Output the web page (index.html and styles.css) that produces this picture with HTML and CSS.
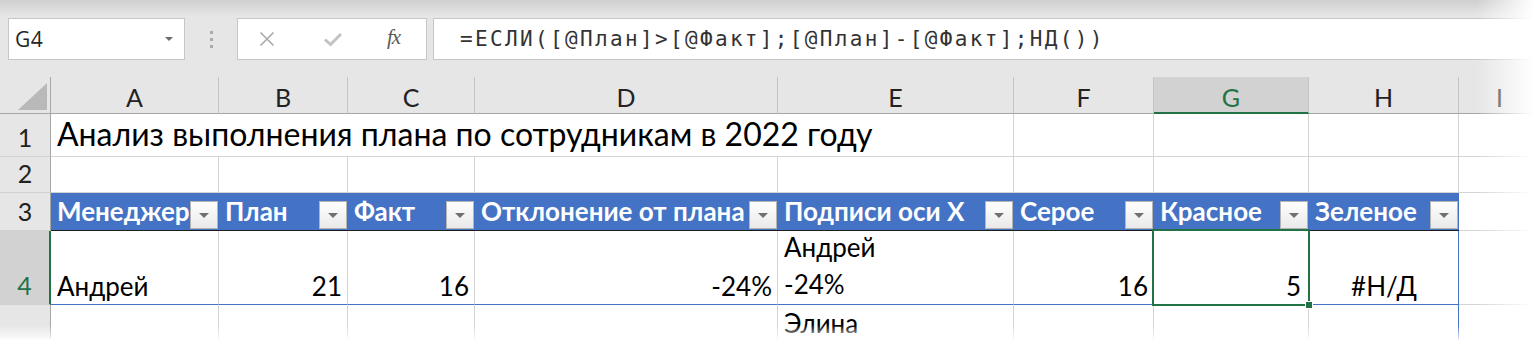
FILE: index.html
```html
<!DOCTYPE html>
<html lang="ru">
<head>
<meta charset="utf-8">
<title>Excel</title>
<link rel="stylesheet" href="styles.css">
</head>
<body>
<div class="app">
  <div class="toolbar">
    <div class="namebox"><span class="nb-text">G4</span><span class="nb-arrow"></span></div>
    <div class="grip"><i></i><i></i><i></i></div>
    <div class="fxbtns">
      <svg class="ic-x" width="16" height="16" viewBox="0 0 16 16"><path d="M1.5 1.5 L14.5 14.5 M14.5 1.5 L1.5 14.5" stroke="#a9a9a9" stroke-width="1.6" fill="none"/></svg>
      <svg class="ic-check" width="20" height="16" viewBox="0 0 20 16"><path d="M2 8.5 L7.5 13.5 L18 3" stroke="#c3c3c3" stroke-width="3" fill="none"/></svg>
      <span class="fx">fx</span>
    </div>
    <div class="formula">=ЕСЛИ([@План]&gt;[@Факт];[@План]-[@Факт];НД())</div>
  </div>

  <div class="sheet">
    <div class="corner"><span class="corner-tri"></span></div>
    <div class="ch">A</div>
    <div class="ch">B</div>
    <div class="ch">C</div>
    <div class="ch">D</div>
    <div class="ch">E</div>
    <div class="ch">F</div>
    <div class="ch ch-sel">G</div>
    <div class="ch">H</div>
    <div class="ch ch-last">I</div>

    <div class="rh">1</div>
    <div class="c c-title">Анализ выполнения плана по сотрудникам в 2022 году</div>
    <div class="c"></div>
    <div class="c"></div>
    <div class="c"></div>
    <div class="c c-last"></div>

    <div class="rh">2</div>
    <div class="c"></div>
    <div class="c"></div>
    <div class="c"></div>
    <div class="c"></div>
    <div class="c"></div>
    <div class="c"></div>
    <div class="c"></div>
    <div class="c"></div>
    <div class="c c-last"></div>

    <div class="rh">3</div>
    <div class="th"><span class="th-label">Менеджер</span><span class="dd"></span></div>
    <div class="th"><span class="th-label">План</span><span class="dd"></span></div>
    <div class="th"><span class="th-label">Факт</span><span class="dd"></span></div>
    <div class="th"><span class="th-label">Отклонение от плана</span><span class="dd"></span></div>
    <div class="th"><span class="th-label">Подписи оси X</span><span class="dd"></span></div>
    <div class="th"><span class="th-label">Серое</span><span class="dd"></span></div>
    <div class="th"><span class="th-label">Красное</span><span class="dd"></span></div>
    <div class="th"><span class="th-label">Зеленое</span><span class="dd"></span></div>
    <div class="c c-last"></div>

    <div class="rh rh-sel">4</div>
    <div class="c r4">Андрей</div>
    <div class="c r4 num">21</div>
    <div class="c r4 num">16</div>
    <div class="c r4 num">-24%</div>
    <div class="c r4 wrap">Андрей<br>-24%</div>
    <div class="c r4 num">16</div>
    <div class="c r4 num sel">5<span class="sel-box"><span class="handle"></span></span></div>
    <div class="c r4 ctr tbl-end">#Н/Д</div>
    <div class="c c-last"></div>

    <div class="rh"></div>
    <div class="c r5"></div>
    <div class="c r5"></div>
    <div class="c r5"></div>
    <div class="c r5"></div>
    <div class="c r5">Элина</div>
    <div class="c r5"></div>
    <div class="c r5"></div>
    <div class="c r5 tbl-end"></div>
    <div class="c c-last"></div>
  </div>

  <div class="fade-top"></div>
  <div class="fade-right"></div>
  <div class="fade-bottom"></div>
</div>
</body>
</html>
```

FILE: styles.css
```css
html, body {
  margin: 0;
  padding: 0;
  background: #ffffff;
}

.app {
  position: relative;
  width: 1540px;
  height: 339px;
  overflow: hidden;
  background: #ffffff;
  font-family: Lato, "Open Sans", sans-serif;
}

/* ---------- formula bar ---------- */
.toolbar {
  height: 77px;
  box-sizing: border-box;
  padding-top: 18px;
  background: #e6e6e6;
  display: flex;
  align-items: flex-start;
}

.namebox {
  margin-left: 8px;
  width: 177px;
  height: 42px;
  box-sizing: border-box;
  background: #ffffff;
  border: 1px solid #c6c6c6;
  display: flex;
  align-items: center;
  justify-content: space-between;
  padding: 0 11px 0 6px;
}

.nb-text {
  font-family: "Open Sans", sans-serif;
  font-size: 21px;
  color: #262626;
  letter-spacing: 0.5px;
}

.nb-arrow {
  width: 0;
  height: 0;
  border-left: 4px solid transparent;
  border-right: 4px solid transparent;
  border-top: 4px solid #6b6b6b;
}

.grip {
  width: 52px;
  height: 42px;
  display: flex;
  flex-direction: column;
  align-items: center;
  justify-content: center;
  gap: 4px;
}

.grip i {
  display: block;
  width: 3px;
  height: 3px;
  background: #ababab;
}

.fxbtns {
  width: 190px;
  height: 42px;
  box-sizing: border-box;
  background: #ffffff;
  border: 1px solid #c6c6c6;
  display: flex;
  align-items: center;
  padding-left: 21px;
}

.ic-check {
  margin-left: 48px;
}

.fx {
  margin-left: 44px;
  font-family: "Liberation Serif", serif;
  font-style: italic;
  font-size: 21px;
  color: #5a5a5a;
  letter-spacing: -1px;
  margin-top: -3px;
}

.formula {
  flex: 1;
  margin-left: 6px;
  height: 42px;
  box-sizing: border-box;
  background: #ffffff;
  border: 1px solid #c6c6c6;
  border-right: none;
  padding-left: 26px;
  font-family: "DejaVu Sans Mono", monospace;
  font-size: 21px;
  letter-spacing: 2.35px;
  line-height: 40px;
  color: #333333;
  white-space: nowrap;
}

/* ---------- sheet grid ---------- */
.sheet {
  display: grid;
  grid-template-columns: 51px 168px 129px 127px 303px 236px 140px 155px 150px 1fr;
  grid-template-rows: 37px 43px 36px 38px 74px 74px;
  font-size: 26px;
  color: #000000;
}

.corner {
  position: relative;
  background: #e6e6e6;
  border-right: 1px solid #a6a6a6;
  border-bottom: 1px solid #a6a6a6;
  box-sizing: border-box;
}

.corner-tri {
  position: absolute;
  right: 3px;
  bottom: 3px;
  width: 29px;
  height: 27px;
  background: #b9b9b9;
  clip-path: polygon(100% 0, 100% 100%, 0 100%);
}

.ch {
  background: #e6e6e6;
  border-right: 1px solid #c4c4c4;
  border-bottom: 1px solid #a6a6a6;
  box-sizing: border-box;
  display: flex;
  align-items: center;
  justify-content: center;
  font-size: 25px;
  color: #222222;
  padding-top: 3px;
}

.ch-sel {
  background: #d2d2d2;
  color: #217346;
  border-bottom: 2px solid #217346;
  padding-top: 4px;
}

.ch-last {
  border-right: none;
}

.rh {
  background: #e6e6e6;
  border-right: 1px solid #a6a6a6;
  border-bottom: 1px solid #d0d0d0;
  box-sizing: border-box;
  display: flex;
  align-items: flex-end;
  justify-content: center;
  font-size: 25px;
  color: #222222;
  padding-bottom: 3px;
  line-height: 31px;
}

.rh-sel {
  background: #d2d2d2;
  color: #217346;
  border-right: 2px solid #217346;
}

.c {
  border-right: 1px solid #d4d4d4;
  border-bottom: 1px solid #d4d4d4;
  box-sizing: border-box;
  display: flex;
  align-items: flex-end;
  padding: 0 5px 2px 6px;
  white-space: nowrap;
  line-height: 31px;
}

.c-last {
  border-right: none;
}

.c-title {
  grid-column: span 5;
  font-size: 32px;
  line-height: 38px;
  padding-bottom: 3px;
}

.th {
  background: #4472c4;
  border-bottom: 1px solid #1e1e1e;
  box-sizing: border-box;
  display: flex;
  align-items: flex-end;
  justify-content: space-between;
  padding: 0 1px 1px 6px;
  color: #ffffff;
  font-weight: 700;
  line-height: 31px;
  white-space: nowrap;
}

.th-label {
  padding-bottom: 2px;
}

.dd {
  flex: none;
  width: 28px;
  height: 28px;
  box-sizing: border-box;
  border: 1px solid #b4b4b4;
  background: linear-gradient(#ffffff, #e9e9e9);
  display: flex;
  align-items: center;
  justify-content: center;
}

.dd::after {
  content: "";
  width: 0;
  height: 0;
  border-left: 5px solid transparent;
  border-right: 5px solid transparent;
  border-top: 5px solid #707070;
}

.r4 {
  border-bottom: 1px solid #4472c4;
}

.num {
  justify-content: flex-end;
}

.ctr {
  justify-content: center;
}

.wrap {
  line-height: 37px;
  padding-bottom: 1px;
}

.r5 {
  align-items: flex-start;
  padding-top: 3px;
  line-height: 31px;
}

.tbl-end {
  border-right: 1px solid #4472c4;
}

.sel {
  position: relative;
  padding-right: 7px;
}

.sel-box {
  position: absolute;
  left: -2px;
  top: -2px;
  right: -2px;
  bottom: -2px;
  border: 2px solid #217346;
}

.handle {
  position: absolute;
  right: -5px;
  bottom: -5px;
  width: 6px;
  height: 6px;
  background: #217346;
  border: 1px solid #ffffff;
}

/* ---------- soft edges of the screenshot ---------- */
.fade-top {
  position: absolute;
  left: 0;
  top: 0;
  width: 100%;
  height: 16px;
  background: linear-gradient(rgba(0, 0, 0, 0.1), rgba(0, 0, 0, 0));
  pointer-events: none;
}

.fade-right {
  position: absolute;
  right: 0;
  top: 0;
  width: 64px;
  height: 100%;
  background: linear-gradient(to right, rgba(255, 255, 255, 0), #ffffff 90%);
  pointer-events: none;
}

.fade-bottom {
  position: absolute;
  left: 0;
  bottom: 0;
  width: 100%;
  height: 14px;
  background: linear-gradient(rgba(255, 255, 255, 0), rgba(255, 255, 255, 0.8));
  pointer-events: none;
}
```
